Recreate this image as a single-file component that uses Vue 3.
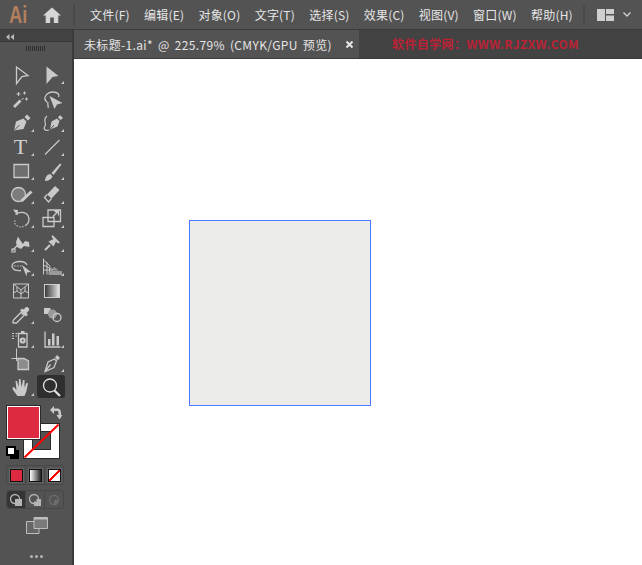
<script setup>
const menus = ['文件(F)', '编辑(E)', '对象(O)', '文字(T)', '选择(S)', '效果(C)', '视图(V)', '窗口(W)', '帮助(H)']
</script>

<template>
  <div class="app">
    <header class="menubar">
      <span class="logo">Ai</span>
      <svg class="home" width="18" height="16" viewBox="0 0 20 16" preserveAspectRatio="none"><path d="M10 0.500 L20 8.500 H17 V16 H12 V10.500 H8 V16 H3 V8.500 H0 Z" /></svg>
      <i class="sep first"></i>
      <nav class="menus"><span v-for="m in menus" :key="m">{{ m }}</span></nav>
      <i class="sep second"></i>
      <svg class="workspace" width="36" height="12" viewBox="0 0 36 12">
        <path class="ws" d="M0 0H8V12H0Z M9 0H17V5H9Z M9 6.500H17V12H9Z" />
        <path class="chev" d="M26.500 3.500 L30 7 L33.500 3.500" />
      </svg>
    </header>

    <div class="body">
      <aside class="toolbar">
        <div class="collapse">
          <svg width="8" height="6" viewBox="0 0 8 6"><path d="M3.500 0V6L0 3Z M8 0V6L4.500 3Z" /></svg>
        </div>
        <div class="grip"><i v-for="n in 10" :key="n"></i></div>

        <div class="tools">
          <div class="tool"><svg class="ico" viewBox="0 0 24 24"><path d="M7.500 4 L19 12.500 L13 13.500 L7.500 20.500 Z" /></svg></div>
          <div class="tool fly"><svg class="ico solid" viewBox="0 0 24 24"><path d="M6.500 3.500 L18.500 13 L12.500 14 L6.500 21 Z" /></svg></div>

          <div class="tool"><svg class="ico" viewBox="0 0 24 24"><path class="thick" d="M5 20 L11.500 13.500" /><path class="fine" d="M12.500 13 L14.500 11 M9.500 5 V9 M7.500 7 H11.500 M15.500 4.500 V7.500 M14 6 H17 M17.500 10.500 V13.500 M16 12 H19" /></svg></div>
          <div class="tool"><svg class="ico" viewBox="0 0 24 24"><path d="M7 15 C2 11 7 5 13 5 C18 5 20 8 18.500 10 M8 15 C7 18 9 19 8 21" /><path class="solid-part" d="M9.500 9 L22.500 16 L17 17.500 L14.500 22 Z" /></svg></div>

          <div class="tool fly"><svg class="ico solid" viewBox="0 0 24 24"><path d="M5 19.500 L7 10.500 L14.500 7.500 L17.500 10.500 L14.500 18 Z M15.500 6 L18 3.500 L21.500 7 L19 9.500 Z" /><path class="cut" d="M5.500 19 L10.500 14" /></svg></div>
          <div class="tool fly"><svg class="ico solid" viewBox="0 0 24 24"><path d="M10 18.500 L11.500 10.500 L17 7.500 L19.500 10 L17.500 15.500 Z M18 6.500 L20 4 L23 7 L20.500 9 Z" /><path class="cut" d="M10.500 18 L14 14" /><path class="line" d="M7 5 C2 9 7 12 5 15 C3 18 5 20 9 19" /></svg></div>

          <div class="tool fly"><span class="type">T</span></div>
          <div class="tool fly"><svg class="ico" viewBox="0 0 24 24"><path d="M5 19.500 L19.500 5" /></svg></div>

          <div class="tool fly"><svg class="ico" viewBox="0 0 24 24"><path class="rect" d="M5 5.500 H19.500 V18.500 H5 Z" /></svg></div>
          <div class="tool fly"><svg class="ico solid" viewBox="0 0 24 24"><path d="M5 22 C5.500 17 7.500 15.500 10.500 15 L12.500 17.500 C11.500 20 8.500 22 5 22 Z M11.500 14 L20 4.500 L21.500 5.500 L13.500 16 Z" /></svg></div>

          <div class="tool fly"><svg class="ico" viewBox="0 0 24 24"><circle class="rect light" cx="9.500" cy="11.500" r="7" /><path class="thick3" d="M12.500 18 L22.500 8.500" /></svg></div>
          <div class="tool fly"><svg class="ico" viewBox="0 0 24 24"><path class="solid-part" d="M11.500 15.500 L19.500 7 L15 3 L7 11.500 Z" /><path d="M7 11.500 L4.500 14.500 L8.500 19 L11.500 15.500" /></svg></div>

          <div class="tool fly"><svg class="ico" viewBox="0 0 24 24"><path d="M6.500 7.500 C10 4.500 16.500 4.500 19 8.500 C21 12 20 16 17 18" /><path class="dots" d="M17 18 C13.500 21 8 20.500 6 16.500 L5.500 12" /><path class="solid-part" d="M4 2.500 L9 3 L8.500 8.500 Z" /></svg></div>
          <div class="tool fly"><svg class="ico" viewBox="0 0 24 24"><path d="M3 10.500 H14 V19.500 H3 Z M8 3 H20.500 V14.500 H8 Z M13 9.500 L18 4.500 M14.500 4.500 H18.500 V8.500" /></svg></div>

          <div class="tool fly"><svg class="ico solid" viewBox="0 0 24 24"><path d="M7 11 L9 5.500 L11 9 L14 13 L16 10 L20 11 L20.500 16 L15 15 L12 18 L8 16 Z" /><path class="line" d="M3.500 19 L9 14 M3 18 H6 V21 H3 Z" /></svg></div>
          <div class="tool fly"><svg class="ico solid" viewBox="0 0 24 24"><path d="M12.500 4 L20 11.500 L18 12.500 L16 10.500 L13.500 15.500 L8.500 10.500 L13.500 8 L11.500 6 Z" /><path class="line thick-line" d="M10 14 L5 19" /></svg></div>

          <div class="tool fly"><svg class="ico" viewBox="0 0 24 24"><path d="M12 15.500 C6 16 3 14 3 11 C3 8 7 6.500 11 6.500 C14 6.500 17 7.500 18 10" /><path class="fine" stroke-dasharray="1.500 1.500" d="M5 11 H14" /><path class="solid-part" d="M13 10 L22 17 L18 17.500 L17.500 21.500 Z" /></svg></div>
          <div class="tool fly"><svg class="ico" viewBox="0 0 24 24"><path class="fine" d="M3.500 3.500 V19.500 M3.500 5 L10 11 L9 19.500 M3.500 10 L13 15 M3.500 15 H13 M7 7 V19.500" /><path class="solid-part soft" d="M10.500 16 H22 V20 H9 Z M14 12 L19 15.500 H11 Z" /></svg></div>

          <div class="tool"><svg class="ico thin" viewBox="0 0 24 24"><path d="M4.500 5 H19.500 V19 H4.500 Z M4.500 5 L12 11 L19.500 5 M12 11 V19 M4.500 14 L8 12 L12 15 L16 12 L19.500 14 M8 8 V12 M16 8 V12" /></svg></div>
          <div class="tool"><svg class="grad-ico" width="16" height="14" viewBox="0 0 16 14"><rect class="grad-frame" x="0.500" y="0.500" width="15" height="13" /></svg></div>

          <div class="tool fly"><svg class="ico" viewBox="0 0 24 24"><path d="M5 20 C3.500 20 3.500 18.500 4.500 17 L12 9.500 L15 12.500 L7.500 20 Z" /><path class="solid-part" d="M11 7.500 L17 13.500 L19 11.500 L17.500 10 L20 7.500 C21 6 19 3.500 17 4 L14.500 6.500 L13 5.500 Z" /></svg></div>
          <div class="tool"><svg class="ico" viewBox="0 0 24 24"><path class="solid-part" d="M4 5 H10.500 V11 H4 Z" /><circle class="solid-part soft" cx="12.500" cy="11" r="4.500" /><circle cx="17" cy="14.500" r="4" /></svg></div>

          <div class="tool fly"><svg class="ico" viewBox="0 0 24 24"><path class="fine" stroke-dasharray="2 1.500" d="M3 6.500 H9 M3 9 H8 M3 11.500 H5" /><path class="solid-part" d="M12 4 H15.500 V6.500 H12 Z" /><path d="M9.500 6.500 H18 V20 H9.500 Z" /><circle cx="13.700" cy="13.500" r="2" class="thick2" /></svg></div>
          <div class="tool fly"><svg class="ico" viewBox="0 0 24 24"><path d="M5 4.500 V20 H20.500" /><path class="solid-part" d="M8 12 H10.500 V18.500 H8 Z M12 6.500 H14.500 V18.500 H12 Z M16.500 9 H19 V18.500 H16.500 Z" /></svg></div>

          <div class="tool"><svg class="ico over" viewBox="0 0 24 24"><path class="rect mid" d="M9 7.500 H15 L19.500 10 V18.500 H9 Z" /><path class="fine" d="M2.500 7.500 H12 M7.500 -2.500 V10" /></svg></div>
          <div class="tool fly"><svg class="ico" viewBox="0 0 24 24"><path d="M5 20.500 L8 11 L14.500 8 L16.500 10 L14 16.500 Z M5 20.500 L10.500 13.500" /><path class="solid-part" d="M15 6.500 L17 4 L20 7 L17.500 9.500 Z" /></svg></div>

          <div class="tool fly"><svg class="ico solid" viewBox="0 0 24 24"><path d="M8.500 21 L4 15 L3.500 12.500 L5 12 L7.500 15 L6.500 6 H8 L9.500 12 L10 4 H11.500 L12.500 12 L14 5 H15.500 L15.500 12.500 L17.500 8 H19 L17.500 16 L15.500 21 Z" /></svg></div>
          <div class="tool active"><svg class="ico zoomer" viewBox="0 0 24 24"><circle cx="11" cy="10.500" r="6.500" /><path class="thick2" d="M15.500 15.500 L21 21" /></svg></div>
        </div>

        <div class="colors">
          <svg class="swap" width="12" height="14" viewBox="0 0 12 14"><path d="M0 4 L4 0 V2.500 H7 C10.500 2.500 11 5 11 7 V9 H12.500 L9.500 13.500 L6.500 9 H8.500 V7 C8.500 5.500 8 5 7 5 H4 V8 Z" /></svg>
          <div class="stroke-box">
            <i class="stroke-hole"></i>
            <svg class="slash" width="35" height="34" viewBox="0 0 35 34"><path d="M0.500 33.500 L34.500 0.500" /></svg>
          </div>
          <div class="fill-box"></div>
          <div class="defaults"><i class="d-stroke"></i><i class="d-fill"></i></div>
        </div>

        <div class="modes">
          <div class="mode"><i class="swatch red"></i></div>
          <div class="mode"><i class="swatch grad"></i></div>
          <div class="mode"><i class="swatch none"></i></div>
        </div>

        <div class="modes draw">
          <div class="mode on"><svg class="dm" width="14" height="14" viewBox="0 0 14 14"><circle class="ring" cx="6" cy="6" r="4.500" /><path class="sq" d="M6 6 H13 V13 H6 Z" /></svg></div>
          <div class="mode"><svg class="dm" width="14" height="14" viewBox="0 0 14 14"><circle class="ring" cx="6" cy="6" r="4.500" /><path class="sq" d="M6 8.500 H8.500 V6 H13 V13 H6 Z" /></svg></div>
          <div class="mode"><svg class="dm dim" width="14" height="14" viewBox="0 0 14 14"><circle class="ring" cx="7" cy="7" r="4.500" /><path class="sq" d="M7 7 H11 A4 4 0 0 1 7 11 Z" /></svg></div>
        </div>

        <div class="screen">
          <svg width="22" height="17" viewBox="0 0 22 17"><path class="sc-back" d="M0.500 4.500 H13 V16.500 H0.500 Z" /><path class="sc-front" d="M8 0.500 H21.500 V11.500 H8 Z" /><path class="sc-bar" d="M8 0.500 H21.500 V2.500 H8 Z" /></svg>
        </div>
        <div class="more"><i></i><i></i><i></i></div>
      </aside>

      <main class="main">
        <div class="tabbar">
          <div class="tab">
            <span class="tab-title">未标题-1.ai* @ 225.79% (CMYK/GPU 预览)</span>
            <svg class="close" width="7" height="7" viewBox="0 0 7 7"><path d="M0.500 0.500 L6.500 6.500 M6.500 0.500 L0.500 6.500" /></svg>
          </div>
          <span class="watermark">软件自学网：WWW.RJZXW.COM</span>
        </div>
        <div class="canvas">
          <div class="artboard"></div>
        </div>
      </main>
    </div>
  </div>
</template>

<style>
html, body { margin: 0; background: #fff; }
</style>

<style scoped>
.app {
  width: 642px;
  height: 565px;
  overflow: hidden;
  display: flex;
  flex-direction: column;
  font-family: "Noto Sans CJK SC", "Noto Sans", sans-serif;
  background: #535353;
}
.menubar {
  height: 30px;
  flex: none;
  box-sizing: border-box;
  display: flex;
  align-items: center;
  background: #535353;
  border-bottom: 1px solid #3b3b3b;
  color: #e6e6e6;
  font-size: 12px;
}
.logo {
  margin-left: 9px;
  width: 18px;
  font: bold 23px/28px "Liberation Sans", sans-serif;
  color: #b27f5f;
  transform: scaleX(0.8);
  transform-origin: left center;
}
.home { margin-left: 16px; fill: #d6d6d6; }
.sep { width: 2px; height: 20px; background: #484848; flex: none; }
.sep.first { margin-left: 12px; }
.sep.second { margin-left: 10px; }
.menus { display: flex; gap: 14.25px; margin-left: 15px; white-space: nowrap; letter-spacing: 0.2px; }
.workspace { margin-left: 12px; }
.ws { fill: #cfcfcf; }
.chev { fill: none; stroke: #cfcfcf; stroke-width: 1.4; }

.body { flex: 1; display: flex; min-height: 0; }

.toolbar {
  width: 72px;
  flex: none;
  margin-right: 2px;
  background: #535353;
  box-shadow: 1px 0 0 #3b3b3b, 2px 0 0 #3b3b3b;
}
.collapse {
  height: 12px;
  box-sizing: border-box;
  padding: 3px 0 0 6px;
  background: #434343;
  border-bottom: 1px solid #393939;
  line-height: 0;
}
.collapse svg { fill: #bdbdbd; }
.grip { height: 21px; box-sizing: border-box; padding-top: 4px; padding-left: 26px; display: flex; gap: 1px; }
.grip i { width: 1px; height: 5px; background: #2f2f2f; }

.tools {
  display: grid;
  grid-template-columns: 31px 31px;
  grid-auto-rows: 24px;
  padding-left: 5px;
}
.tool { position: relative; display: flex; align-items: center; justify-content: center; }
.tool.fly::after {
  content: "";
  position: absolute;
  right: 2px;
  bottom: 3px;
  border-style: solid;
  border-width: 0 0 3px 3px;
  border-color: transparent transparent #c9c9c9 transparent;
}
.tool.fly:nth-child(even)::after { right: 3px; }
.tool.active { background: #2f2f2f; border-radius: 3px; margin: 0 2px 1px 1px; }
.ico { width: 24px; height: 24px; fill: none; stroke: #c9c9c9; stroke-width: 1.3; }
.ico.over { overflow: visible; }
.ico.solid { fill: #c9c9c9; stroke: none; }
.ico.thin { stroke-width: 1; }
.thick { stroke-width: 2.8; }
.thick2 { stroke-width: 2.2; }
.thick3 { stroke-width: 3; }
.fine { stroke-width: 1; }
.solid-part { fill: #c9c9c9; stroke: none; }
.solid-part.soft { fill: #9a9a9a; }
.rect { fill: #6e6e6e; }
.rect.light { fill: #7c7c7c; }
.rect.mid { fill: #8c8c8c; }
.cut { stroke: #535353; stroke-width: 1; fill: none; }
.line { fill: none; stroke: #c9c9c9; stroke-width: 1.2; }
.thick-line { stroke-width: 2; }
.dots { stroke-dasharray: 1.3 1.6; }
.type {
  font: 22px/24px "Liberation Serif", serif;
  color: #d0d0d0;
}
.grad-frame { fill: none; stroke: #cfcfcf; }
.grad-ico { background: linear-gradient(90deg, #2e2e2e, #eeeeee); }
.zoomer { stroke: #e2e2e2; }

.colors { position: relative; height: 60px; margin-top: 6px; }
.fill-box {
  position: absolute;
  left: 7px;
  top: 1px;
  width: 31px;
  height: 31px;
  background: #dd2a41;
  border: 1px solid #fff;
  outline: 1px solid #2a2a2a;
}
.stroke-box {
  position: absolute;
  left: 24px;
  top: 19px;
  width: 35px;
  height: 34px;
  background: #fff;
  outline: 1px solid #2a2a2a;
}
.stroke-hole {
  position: absolute;
  left: 9px;
  top: 8px;
  width: 17px;
  height: 17px;
  background: #535353;
  outline: 1px solid #2a2a2a;
}
.slash { position: absolute; left: 0; top: 0; }
.slash path { stroke: #ff0000; stroke-width: 2; fill: none; }
.swap { position: absolute; left: 50px; top: 1px; fill: #c9c9c9; overflow: visible; }
.defaults { position: absolute; left: 6px; top: 41px; width: 13px; height: 13px; }
.d-stroke, .d-fill { position: absolute; }
.d-stroke { left: 4px; top: 4px; width: 9px; height: 9px; background: #000; }
.d-fill { left: 0; top: 0; width: 6px; height: 6px; background: #fff; border: 2px solid #000; }

.modes {
  display: flex;
  box-sizing: border-box;
  width: 58px;
  height: 20px;
  margin: 0 0 0 6px;
  border: 1px solid #484848;
  border-radius: 3px;
}
.modes.draw { margin-top: 5px; height: 19px; }
.mode { flex: 1; display: flex; align-items: center; justify-content: center; border-right: 1px solid #484848; }
.mode:last-child { border-right: 0; }
.mode.on { background: #353535; border-radius: 3px 0 0 3px; }
.swatch { width: 11px; height: 11px; border: 1px solid #111; display: block; box-shadow: 0 0 0 0.5px #777; }
.swatch.red { background: #dd2a41; }
.swatch.grad { background: linear-gradient(90deg, #fff, #222); }
.swatch.none { background: linear-gradient(to top left, #fff 0 42%, #f00 42% 58%, #fff 58% 100%); }
.dm { display: block; }
.ring { fill: none; stroke: #b5b5b5; stroke-width: 1.3; }
.sq { fill: #b5b5b5; }
.dim .ring { stroke: #6d6d6d; }
.dim .sq { fill: #6d6d6d; }

.screen { display: flex; justify-content: center; margin-top: 8px; margin-left: 1px; line-height: 0; }
.sc-back { fill: #666; stroke: #bdbdbd; }
.sc-front { fill: #7a7a7a; stroke: #bdbdbd; }
.sc-bar { fill: #bdbdbd; }
.more { display: flex; justify-content: center; gap: 2px; margin-top: 21px; margin-left: 1px; }
.more i { width: 3px; height: 3px; border-radius: 50%; background: #b5b5b5; }

.main { flex: 1; display: flex; flex-direction: column; min-width: 0; }
.tabbar {
  height: 29px;
  flex: none;
  box-sizing: border-box;
  display: flex;
  align-items: center;
  background: #434343;
  border-bottom: 1px solid #3b3b3b;
}
.tab {
  width: 285px;
  height: 100%;
  flex: none;
  box-sizing: border-box;
  display: flex;
  align-items: center;
  background: #535353;
  padding-left: 10px;
  color: #e4e4e4;
  font-size: 12px;
  white-space: pre;
}
.tab-title { width: 262px; flex: none; word-spacing: 2px; letter-spacing: 0.35px; }
.close { stroke: #e6e6e6; stroke-width: 2; }
.watermark {
  margin-left: 33px;
  padding-bottom: 2px;
  font-size: 12px;
  font-weight: 700;
  color: #bb2236;
  letter-spacing: 0.4px;
  white-space: nowrap;
}
.canvas { flex: 1; background: #fff; padding: 161px 0 0 115px; }
.artboard {
  width: 180px;
  height: 184px;
  background: #ebebe9;
  border: 1px solid #4a7dff;
}
</style>
